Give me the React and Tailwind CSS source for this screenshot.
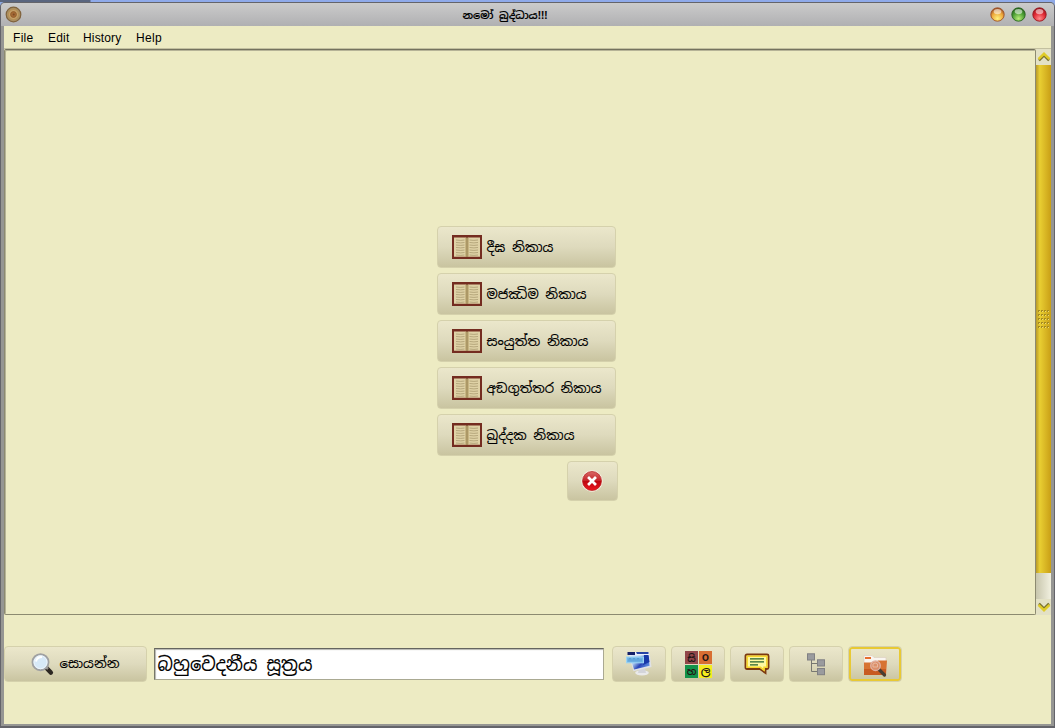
import React from 'react';

const buttonFace =
  'flex shrink-0 items-center rounded-[4px] border border-[#d5d1ac] bg-linear-to-b from-[#ebe7cb] via-[#dedabd] to-[#c9c4a0] text-black';
const sinhala = "font-['Noto_Sans_Sinhala','Iskoola_Pota','Noto_Sans',sans-serif]";

function Label({ text, width, size, dy = 5 }) {
  return (
    <svg className={`block shrink-0 overflow-visible ${sinhala}`} width={width} height="20">
      <text x="0.5" y={10 + dy} fontSize={size} textLength={width} lengthAdjust="spacingAndGlyphs" fill="#000" stroke="#000" strokeWidth="0.1">
        {text}
      </text>
    </svg>
  );
}

function BookIcon() {
  const rows = [5, 7.5, 10, 12.5, 15, 17.5, 20];
  return (
    <svg className="shrink-0" width="31" height="25" viewBox="0 0 31 25">
      <rect x="0" y="0" width="30" height="24" fill="#742c20" />
      <path d="M2 2.5H14L15 3.3L16 2.5H28V21.8H2Z" fill="#dfd2a6" />
      <rect x="13" y="2.8" width="4" height="19" fill="#b9a46c" opacity="0.6" />
      <path d="M15 2.5V22" stroke="#8b7444" strokeWidth="0.9" />
      {rows.map((y) => (
        <path key={y} d={`M4 ${y}Q9 ${y + 0.8} 12.5 ${y}M17.5 ${y}Q22 ${y + 0.8} 26 ${y}`} stroke="#a99a70" strokeWidth="0.8" fill="none" />
      ))}
    </svg>
  );
}

function AppIcon() {
  return (
    <svg width="17" height="17" viewBox="0 0 17 17">
      <circle cx="8.5" cy="8.5" r="7.3" fill="#a98f62" stroke="#80633d" strokeWidth="1.2" />
      <circle cx="8.5" cy="8.5" r="5" fill="#c5a26b" stroke="#b88f52" />
      <circle cx="8.5" cy="8.5" r="2.9" fill="#a56a35" stroke="#955f2b" />
      <circle cx="8.7" cy="8.4" r="1" fill="#7d4b24" />
    </svg>
  );
}

function Orb({ id, light, mid, dark }) {
  return (
    <svg width="15" height="15" viewBox="0 0 15 15">
      <defs>
        <radialGradient id={id} cx="50%" cy="80%" r="75%">
          <stop offset="0" stopColor={light} />
          <stop offset="0.6" stopColor={mid} />
          <stop offset="1" stopColor={dark} />
        </radialGradient>
      </defs>
      <circle cx="7.5" cy="7.5" r="6.7" fill={`url(#${id})`} stroke={dark} strokeWidth="0.9" />
      <ellipse cx="7.5" cy="4.6" rx="3.8" ry="2.6" fill="#fff" opacity="0.55" />
    </svg>
  );
}

function SearchIcon() {
  return (
    <svg width="24" height="24" viewBox="0 0 24 24">
      <path d="M15.5 16L19.8 20.5" stroke="#2c2722" strokeWidth="4.6" strokeLinecap="round" />
      <path d="M14 14L17 17" stroke="#938e88" strokeWidth="2.5" />
      <circle cx="9.5" cy="10.2" r="8" fill="#d7e9f7" stroke="#a0a1a2" strokeWidth="1.9" />
      <circle cx="9.5" cy="10.2" r="6.5" fill="none" stroke="#edf5fb" strokeWidth="1" />
      <path d="M5 9.5Q6 5 11 5" stroke="#fff" strokeWidth="2" fill="none" />
    </svg>
  );
}

function CloseIcon() {
  return (
    <svg width="22" height="22" viewBox="0 0 22 22">
      <defs>
        <linearGradient id="stop" x1="0" y1="0" x2="0" y2="1">
          <stop offset="0" stopColor="#d96a68" />
          <stop offset="0.48" stopColor="#c52328" />
          <stop offset="0.52" stopColor="#bd0710" />
          <stop offset="1" stopColor="#ee1820" />
        </linearGradient>
      </defs>
      <circle cx="11" cy="11" r="10.7" fill="#f5eee0" />
      <circle cx="11" cy="11" r="9.5" fill="url(#stop)" stroke="#b51c1c" strokeWidth="0.7" />
      <path d="M8 8L14 14M14 8L8 14" stroke="#fff" strokeWidth="2.7" strokeLinecap="square" />
    </svg>
  );
}

function MonitorIcon() {
  return (
    <svg width="28" height="28" viewBox="0 0 28 28">
      <defs>
        <linearGradient id="screen" x1="0" y1="0" x2="1" y2="0.7">
          <stop offset="0" stopColor="#f2f7ff" />
          <stop offset="0.45" stopColor="#a9c8ee" />
          <stop offset="0.7" stopColor="#2a45b8" />
          <stop offset="1" stopColor="#5f8de0" />
        </linearGradient>
      </defs>
      <ellipse cx="17" cy="22.8" rx="6.8" ry="2.6" fill="#e9e9ea" />
      <path d="M14 19H20L21 23H13Z" fill="#d3d4da" />
      <path d="M3 2.5L24.5 2.5L26.5 17L8.5 21.2Z" fill="#dfe1e6" />
      <path d="M4 3.5L23 3L24.6 15.8L9 19.5Z" fill="url(#screen)" />
      <path d="M2.5 2H10V5H2.5Z" fill="#141f68" />
      <path d="M10 2.2H24V5.5H10Z" fill="#e9effa" />
      <path d="M11 2H23.5V4H12Z" fill="#2743a5" />
      <path d="M19 5H23.5L24.5 12L18 15Z" fill="#1838a8" />
      <rect x="1.5" y="7" width="17" height="5.8" fill="#74b6e8" stroke="#9cd4f4" />
      <path d="M4 11.5V8.7H6V11.5M8 11.5V8.7H10V11.5M12 11.5V8.7H14V11.5M16 11.5V8.7" stroke="#4c92cd" strokeWidth="0.8" fill="none" />
    </svg>
  );
}

function LettersIcon() {
  return (
    <svg className={`${sinhala} font-semibold`} width="27" height="27" viewBox="0 0 27 27" fill="#231515" textAnchor="middle">
      <rect width="13" height="13" fill="#91464a" />
      <rect x="14" width="13" height="13" fill="#d86e32" />
      <rect y="14" width="13" height="13" fill="#12924a" />
      <rect x="14" y="14" width="13" height="13" fill="#f4ed20" />
      <text x="6.5" y="11" fontSize="10">සි</text>
      <text x="20.5" y="10" fontSize="12">o</text>
      <text x="6.5" y="24" fontSize="10">හ</text>
      <text x="20.5" y="24" fontSize="11">ල</text>
    </svg>
  );
}

function ChatIcon() {
  return (
    <svg width="26" height="22" viewBox="0 0 26 22">
      <path d="M2.5 1.5H23Q24.5 1.5 24.5 3V14.5Q24.5 16 23 16H21.5V20L16 16H3Q1.5 16 1.5 14.5V3Q1.5 1.5 3 1.5Z" fill="#fdf8a0" stroke="#7c3a10" strokeWidth="1.9" />
      <path d="M3.2 3.2H22.8V14.3H20V17.2L16.4 14.3H3.2Z" fill="none" stroke="#f8d52a" strokeWidth="1.5" />
      <path d="M6 5.8H20M6 8.8H20M6 11.8H14" stroke="#24602d" strokeWidth="1.3" />
    </svg>
  );
}

function TreeIcon() {
  return (
    <svg width="20" height="23" viewBox="0 0 20 23">
      <path d="M5.5 7V18.5H11M5.5 10.5H11" fill="none" stroke="#777771" />
      <g fill="#9a9b9e" stroke="#808083">
        <rect x="1.5" y="0.8" width="7" height="6.2" />
        <rect x="11.5" y="6.8" width="7" height="6.2" />
        <rect x="11.5" y="15.5" width="7" height="6.2" />
      </g>
    </svg>
  );
}

function FolderIcon() {
  return (
    <svg width="26" height="24" viewBox="0 0 26 24">
      <path d="M2 1.5H10L12 3.5H24V20H2Z" fill="#f9f5f0" stroke="#ddd0c2" strokeWidth="0.7" />
      <path d="M3 4H9" stroke="#e66d2e" strokeWidth="2" />
      <path d="M2 8.5H14L16 6.5H25L24 21H2Z" fill="#d77332" />
      <path d="M2 15H24V21H2Z" fill="#c85a20" />
      <path d="M17 15.5L22.5 21" stroke="#493e31" strokeWidth="3.2" strokeLinecap="round" />
      <circle cx="13.5" cy="11.7" r="4.8" fill="#dd9270" fillOpacity="0.9" stroke="#dfb0a2" strokeWidth="1.3" />
      <path d="M11 10Q13 8 15.5 10V13H11Z" fill="none" stroke="#e9bda5" strokeWidth="0.9" />
    </svg>
  );
}

function Chevron({ down = false }) {
  return (
    <svg width="14" height="14" viewBox="0 0 14 14" className={down ? 'rotate-180' : ''}>
      <path d="M2 10.5L7 5.5L12 10.5" fill="none" stroke="#77702e" strokeWidth="2.4" />
      <path d="M1.5 9.2L7 3.8L12.5 9.2" fill="none" stroke="#dfcb28" strokeWidth="2.4" />
    </svg>
  );
}

const books = [
  ['දීඝ නිකාය', 67],
  ['මජඣිම නිකාය', 100],
  ['සංයුත්ත නිකාය', 102],
  ['අඞගුත්තර නිකාය', 115],
  ['ඛුද්දක නිකාය', 88],
];

export default function App() {
  return (
    <div className="flex h-[728px] w-[1055px] flex-col overflow-hidden bg-[#8fa9df]">
      <div className="h-[2px] shrink-0 bg-linear-to-r from-[#59657f] from-[90px] to-[#8faaea] to-[91px]" />
      <div className="flex min-h-0 flex-1 flex-col rounded-t-[5px] border border-b-2 border-[#64646a] bg-[#969693] pr-[3px] pb-[2px] pl-[3px]">
        <header className="-mr-[3px] -ml-[3px] flex h-[23px] shrink-0 items-center rounded-t-[4px] bg-linear-to-b from-[#cbcbcb] to-[#b0b0b2] pr-[7px] pl-[4px]">
          <AppIcon />
          <div className="flex flex-1 justify-center pr-[4px]">
            <div className="h-[20px] font-semibold"><Label text="නමෝ බුද්ධාය!!!" width={85} size={10} dy={4} /></div>
          </div>
          <div className="flex gap-[6px]">
            <Orb id="yellow" light="#fff17d" mid="#eda73a" dark="#9e5127" />
            <Orb id="green" light="#b9ed77" mid="#4b9e35" dark="#28651f" />
            <Orb id="red" light="#ff8a8a" mid="#df2732" dark="#991820" />
          </div>
        </header>

        <div className="flex min-h-0 flex-1 flex-col bg-[#edebc3]">
          <nav className="flex h-[23px] shrink-0 items-center border-b border-[#c3c0a0] pt-[2px] pl-[9px] font-['Liberation_Sans',sans-serif] text-[12px] leading-[20px] text-black">
            <span className="w-[35px] tracking-[0.3px]">File</span>
            <span className="w-[35px] tracking-[0.2px]">Edit</span>
            <span className="w-[53px] tracking-[0.15px]">History</span>
            <span className="tracking-[0.3px]">Help</span>
          </nav>

          <div className="flex h-[566px] shrink-0">
            <main className="flex w-[1032px] shrink-0 flex-col items-center rounded-[2px] border border-[#8c8a70] border-t-[#74725e] pt-[176px] shadow-[inset_1px_1px_0_#b6b397]">
              <div className="flex w-[179px] translate-x-[6px] flex-col gap-[5px]">
                {books.map(([name, width]) => (
                  <button key={name} className={`${buttonFace} h-[42px] w-full gap-[3px] pl-[14px]`}>
                    <BookIcon />
                    <span className="-mt-[1px]"><Label text={name} width={width} size={13.5} /></span>
                  </button>
                ))}
                <button className={`${buttonFace} -mr-[2px] h-[40px] w-[51px] justify-center self-end`}>
                  <CloseIcon />
                </button>
              </div>
            </main>
            <aside className="flex flex-1 flex-col items-center bg-linear-to-r from-[#c8c6ad] to-[#f1f0df]">
              <div className="flex h-[16px] w-full items-center justify-center bg-[#e3e1c5]"><Chevron /></div>
              <div className="flex h-[508px] w-full items-center justify-center bg-linear-to-r from-[#b8992a] via-[#e9cf32] via-25% to-[#c99f15]">
                <div className="grid grid-cols-4 gap-x-[1px] gap-y-[2px]">
                  {Array.from({ length: 20 }, (_, i) => (
                    <span key={i} className="h-[2px] w-[2px] border-t border-l border-[#a58a20] bg-[#efdc70]" />
                  ))}
                </div>
              </div>
              <div className="h-[26px] w-full" />
              <div className="flex h-[16px] w-full items-center justify-center bg-[#e3e1c5]"><Chevron down /></div>
            </aside>
          </div>

          <footer className="flex items-center pt-[31px]">
            <button className={`${buttonFace} h-[36px] w-[143px] gap-[4px] pl-[26px]`}>
              <SearchIcon />
              <span className="-mt-[2px]"><Label text="සොයන්න" width={60} size={13} /></span>
            </button>
            <div className="ml-[7px] flex h-[32px] w-[450px] items-center border border-[#aaa992] border-t-[#65655f] border-l-[#777769] bg-white pl-[2px] shadow-[inset_1px_1px_1px_#b5b5b0]">
              <Label text="බහුවෙදනීය සූත්‍රය" width={155} size={19} dy={7} />
            </div>
            <div className="ml-[8px] flex gap-[5px]">
              <button className={`${buttonFace} h-[36px] w-[54px] justify-center`}><MonitorIcon /></button>
              <button className={`${buttonFace} h-[36px] w-[54px] justify-center`}><LettersIcon /></button>
              <button className={`${buttonFace} h-[36px] w-[54px] justify-center`}><ChatIcon /></button>
              <button className={`${buttonFace} h-[36px] w-[54px] justify-center`}><TreeIcon /></button>
              <button className={`${buttonFace} h-[36px] w-[54px] justify-center pt-[3px] shadow-[inset_0_0_0_2px_#e8c934]`}><FolderIcon /></button>
            </div>
          </footer>
        </div>
      </div>
    </div>
  );
}
